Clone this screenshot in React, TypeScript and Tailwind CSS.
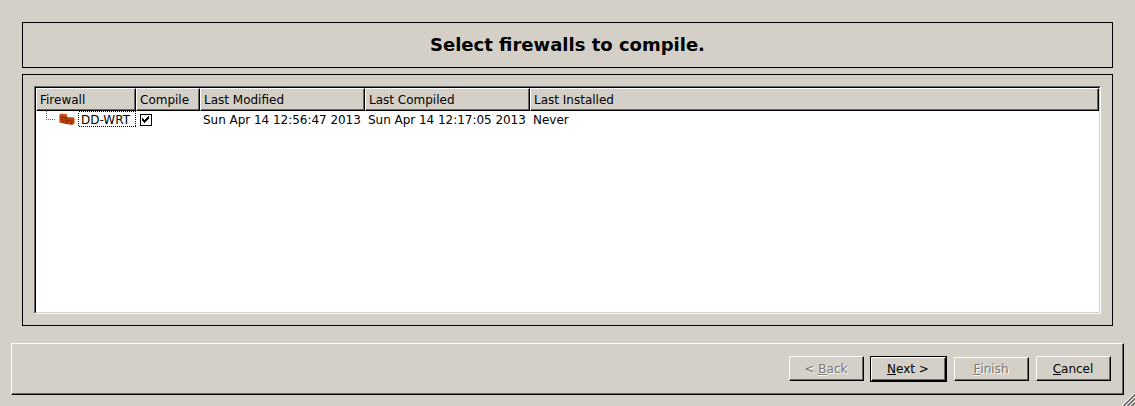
import React from "react";

type ButtonProps = { hotkey: string; before?: string; after?: string; disabled?: boolean; primary?: boolean; className?: string; labelClass?: string };

function WizardButton({ hotkey, before = "", after = "", disabled, primary, className = "", labelClass = "" }: ButtonProps) {
  return (
    <button disabled={disabled} className={`block shrink-0 text-[12px] leading-[14px] ${primary ? "border border-black" : ""} ${className}`}>
      <span className="block h-full w-full border border-t-white border-l-white border-r-black border-b-black">
        <span
          className={`flex h-full w-full items-center justify-center whitespace-pre border-r border-b border-[#6a6866] ${labelClass} ${
            disabled ? "text-[#787672] [text-shadow:1px_1px_0_#fff]" : "text-black"
          }`}
        >
          <span className="whitespace-pre">
            {before}
            <span className={`inline-block h-[13px] border-b leading-[14px] ${disabled ? "border-[#787672] shadow-[0_1px_0_#fff]" : "border-black"}`}>{hotkey}</span>
            {after}
          </span>
        </span>
      </span>
    </button>
  );
}

const columns = [
  { label: "Firewall", width: "w-[100px]" },
  { label: "Compile", width: "w-[64px]" },
  { label: "Last Modified", width: "w-[165px]" },
  { label: "Last Compiled", width: "w-[165px]" },
  { label: "Last Installed", width: "w-[569px]" },
];

function BrickIcon() {
  return (
    <svg width="16" height="12" viewBox="0 0 16 12" className="block">
      <path d="M0.5 1.5 2 .5l6 .8V4l6.5.4 1 .8v5.3l-1.5 1L7 10.6.5 9z" fill="#cc450c" />
      <path d="M.5 3.6l7 1 7.5 1.4M.5 6.3l7 1.2 7.5 1M4 1.2v3M2.5 4v2.6M6 4.5v2.6M4 6.9v2.9M11 5.3v2.6M8.5 7.5v3M12.5 8.2v3" stroke="#7a2a08" strokeWidth=".7" fill="none" />
      <path d="M7.5 4.2V10.6M.5 9 7 10.6l7 .9" stroke="#8e300a" strokeWidth=".8" fill="none" />
      <path d="M1.5 1.8 7 2.3M8.5 4.7l6 .5" stroke="#ed6a2c" strokeWidth=".7" />
    </svg>
  );
}

export default function App() {
  return (
    <main className="flex h-[406px] w-[1135px] flex-col overflow-hidden bg-[#d4d0c8] pt-[22px] font-['DejaVu_Sans',sans-serif] text-[12px] leading-[14px] text-black">
      <header className="ml-[22px] flex h-[46px] w-[1091px] shrink-0 items-center justify-center border border-black">
        <h1 className="text-[18px] leading-[22px] font-bold">Select firewalls to compile.</h1>
      </header>

      <section className="mt-[6px] ml-[22px] h-[252px] w-[1091px] shrink-0 border border-black pt-[11px] pl-[11px]">
        <div className="h-[228px] w-[1067px] border border-t-[#6a6866] border-l-[#6a6866] border-r-white border-b-white">
          <div className="h-full border border-t-black border-l-black border-r-[#d4d0c8] border-b-[#d4d0c8] bg-white">
            <div className="flex h-[23px]">
              {columns.map((c) => (
                <div key={c.label} className={`${c.width} h-[23px] shrink-0 border border-t-white border-l-white border-r-black border-b-black bg-[#d4d0c8]`}>
                  <div className="flex h-full items-center border-r border-b border-[#6a6866] pt-[2px] pl-[3px] whitespace-nowrap">{c.label}</div>
                </div>
              ))}
            </div>
            <div className="flex h-[17px] items-center whitespace-nowrap">
              <div className="flex h-[17px] w-[100px] shrink-0">
                <svg width="23" height="17" className="shrink-0" shapeRendering="crispEdges">
                  <path d="M10.5 0V9" stroke="#606060" strokeDasharray="1 1" />
                  <path d="M10 8.5H20" stroke="#606060" strokeDasharray="1 1" />
                </svg>
                <div className="mt-[2px] w-[19px] shrink-0"><BrickIcon /></div>
                <svg width="58" height="17" className="-mr-[58px] shrink-0" shapeRendering="crispEdges">
                  <rect x=".5" y=".5" width="57" height="15" fill="none" stroke="#000" strokeDasharray="1 1" />
                </svg>
                <span className="ml-[3px] pt-[2px]">DD-WRT</span>
              </div>
              <div className="w-[67px] shrink-0 pl-[4px]">
                <svg width="12" height="12" viewBox="0 0 12 12" className="mt-px block" shapeRendering="crispEdges">
                  <rect x=".5" y=".5" width="11" height="11" fill="#fff" stroke="#000" />
                  <path d="M2 4h1v1h1v1h1V5h1V4h1V3h1V2h1v3H8v1H7v1H6v1H5v1H4V8H3V7H2z" fill="#000" />
                </svg>
              </div>
              <span className="w-[165px] shrink-0 tracking-[-0.03px]">Sun Apr 14 12:56:47 2013</span>
              <span className="w-[165px] shrink-0 tracking-[-0.03px]">Sun Apr 14 12:17:05 2013</span>
              <span>Never</span>
            </div>
          </div>
        </div>
      </section>

      <footer className="mt-[17px] ml-[11px] h-[52px] w-[1113px] shrink-0 border border-t-white border-l-white border-r-black border-b-black">
        <div className="flex h-full items-start justify-end border-r border-b border-[#6a6866] pt-[12px] pr-[11px]">
          <WizardButton before="< " hotkey="B" after="ack" disabled className="h-[25px] w-[75px]" labelClass="pt-[2px]" />
          <WizardButton hotkey="N" after="ext >" primary className="ml-[6px] h-[26px] w-[77px]" />
          <WizardButton hotkey="F" after="inish" disabled className="mt-px ml-[7px] h-[24px] w-[75px]" />
          <WizardButton hotkey="C" after="ancel" className="ml-[7px] h-[25px] w-[75px]" labelClass="pt-[2px]" />
        </div>
      </footer>
      <svg width="13" height="13" viewBox="0 0 13 13" className="-mt-[2px] ml-auto block shrink-0">
        <path d="M0 13 13 0M4 13 13 4M8 13 13 8" stroke="#fff" strokeWidth="1.2" />
        <path d="M1.5 13 13 1.5M5.5 13 13 5.5M9.5 13 13 9.5" stroke="#6a6866" strokeWidth="1.6" />
      </svg>
    </main>
  );
}
